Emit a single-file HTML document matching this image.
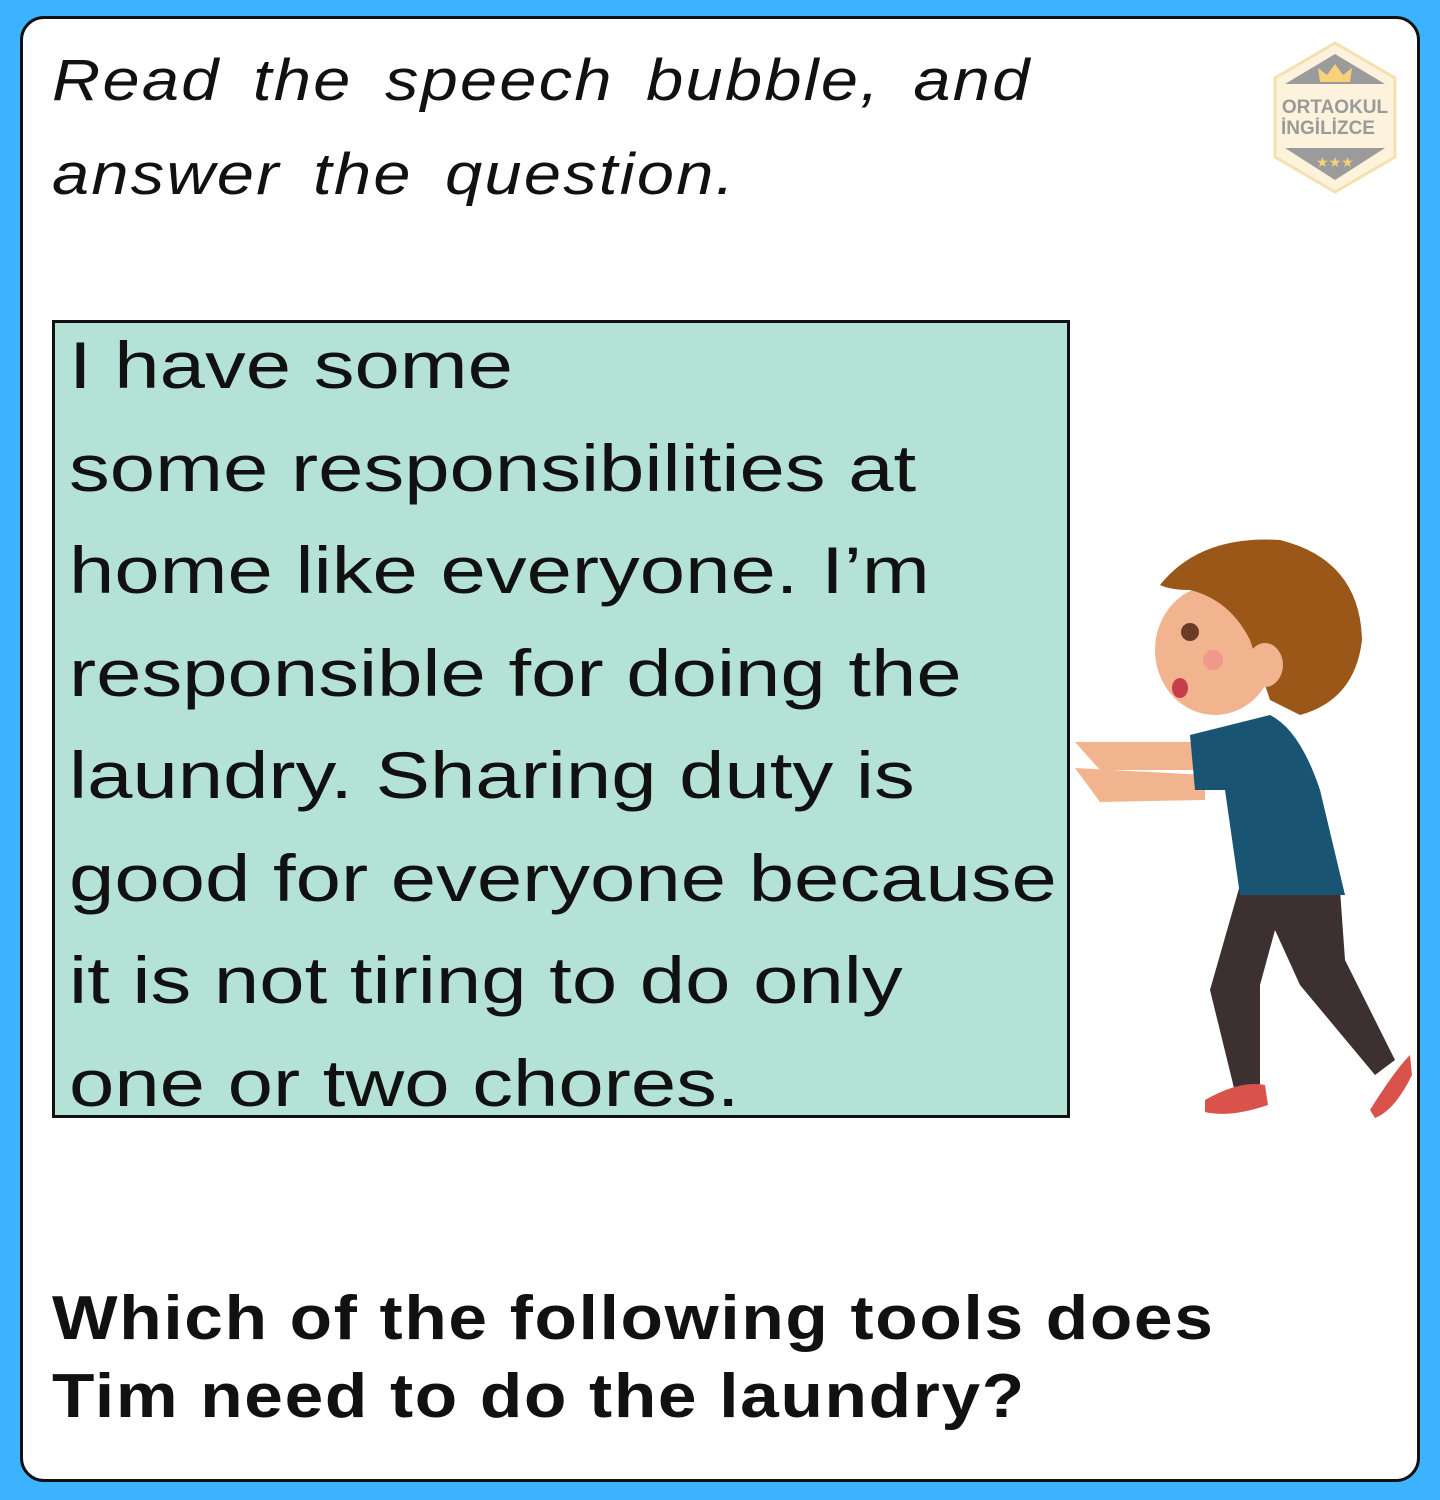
<!DOCTYPE html>
<html><head><style>
html,body{margin:0;padding:0}
body{width:1440px;height:1500px;background:#3db3ff;position:relative;overflow:hidden;font-family:"Liberation Sans",sans-serif}
.card{position:absolute;left:20px;top:16px;width:1394px;height:1460px;background:#fff;border:3px solid #111;border-radius:24px}
.title{position:absolute;left:52px;top:34px;font-size:58px;font-style:italic;line-height:94px;letter-spacing:2px;word-spacing:10px;color:#111;transform:scaleX(1.15);transform-origin:left top;white-space:nowrap}
.box{position:absolute;left:52px;top:320px;width:1012px;height:792px;background:#b5e2d6;border:3px solid #111;overflow:hidden}
.box p{margin:0;position:absolute;left:14px;top:-9px;font-size:66px;line-height:102.5px;color:#111;white-space:nowrap;transform:scaleX(1.235);transform-origin:left top}
.q{position:absolute;left:52px;top:1280px;font-size:62px;font-weight:bold;line-height:78px;letter-spacing:1.5px;color:#111;transform:scaleX(1.12);transform-origin:left top;white-space:nowrap}
</style></head><body>
<div class="card"></div>
<div class="title">Read the speech bubble, and<br>answer the question.</div>
<svg style="position:absolute;left:1270px;top:40px" width="130" height="155" viewBox="0 0 130 155">
<polygon points="65,3 125,38 125,117 65,152 5,117 5,38" fill="#fdf3dc" stroke="#f3e1b0" stroke-width="3"/>
<polygon points="65,14 115,44 15,44" fill="#9b9b9b"/>
<polygon points="15,108 115,108 65,140" fill="#9b9b9b"/>
<path d="M50,42 L48,28 L57,35 L65,24 L73,35 L82,28 L80,42 Z" fill="#f7d27a"/>
<text x="65" y="73" text-anchor="middle" font-size="19" font-weight="bold" fill="#9a9a9a">ORTAOKUL</text>
<text x="58" y="94" text-anchor="middle" font-size="19" font-weight="bold" fill="#9a9a9a">İNGİLİZCE</text>
<text x="65" y="127" text-anchor="middle" font-size="14" fill="#f7d27a">★★★</text>
</svg>
<div class="box"><p>I have some<br>some responsibilities at<br>home like everyone. I’m<br>responsible for doing the<br>laundry. Sharing duty is<br>good for everyone because<br>it is not tiring to do only<br>one or two chores.</p></div>
<svg style="position:absolute;left:0;top:0" width="1440" height="1500">
<path d="M1240,885 L1340,890 L1345,960 L1395,1060 L1375,1075 L1300,985 L1275,930 L1260,985 L1260,1090 L1235,1092 L1210,990 Z" fill="#3d3030"/>
<path d="M1205,1100 Q1240,1080 1265,1085 L1268,1105 Q1230,1118 1205,1112 Z" fill="#d9534a"/>
<path d="M1370,1110 Q1395,1070 1410,1055 L1412,1075 Q1395,1110 1375,1118 Z" fill="#d9534a"/>
<path d="M1075,742 L1200,742 L1200,770 L1100,770 Z" fill="#f2b48e"/>
<path d="M1075,768 L1205,775 L1205,800 L1100,802 Z" fill="#f2b48e"/>
<path d="M1190,735 L1270,715 Q1300,730 1320,790 L1345,895 L1240,895 L1225,790 L1195,790 Z" fill="#1a5473"/>
<ellipse cx="1215" cy="650" rx="60" ry="65" fill="#f2b48e"/>
<polygon points="1160,640 1175,625 1180,660" fill="#f2b48e"/>
<path d="M1160,585 Q1200,535 1280,540 Q1360,560 1362,640 Q1355,700 1300,715 L1270,700 L1250,640 Q1230,600 1190,590 Q1170,590 1160,585 Z" fill="#9a5718"/>
<ellipse cx="1265" cy="665" rx="18" ry="22" fill="#f2b48e"/>
<circle cx="1190" cy="632" r="9" fill="#6b3c23"/>
<circle cx="1213" cy="660" r="10" fill="#f08c8c" opacity="0.7"/>
<ellipse cx="1180" cy="688" rx="8" ry="10" fill="#c73d4a"/>
</svg>
<div class="q">Which of the following tools does<br>Tim need to do the laundry?</div>
</body></html>
